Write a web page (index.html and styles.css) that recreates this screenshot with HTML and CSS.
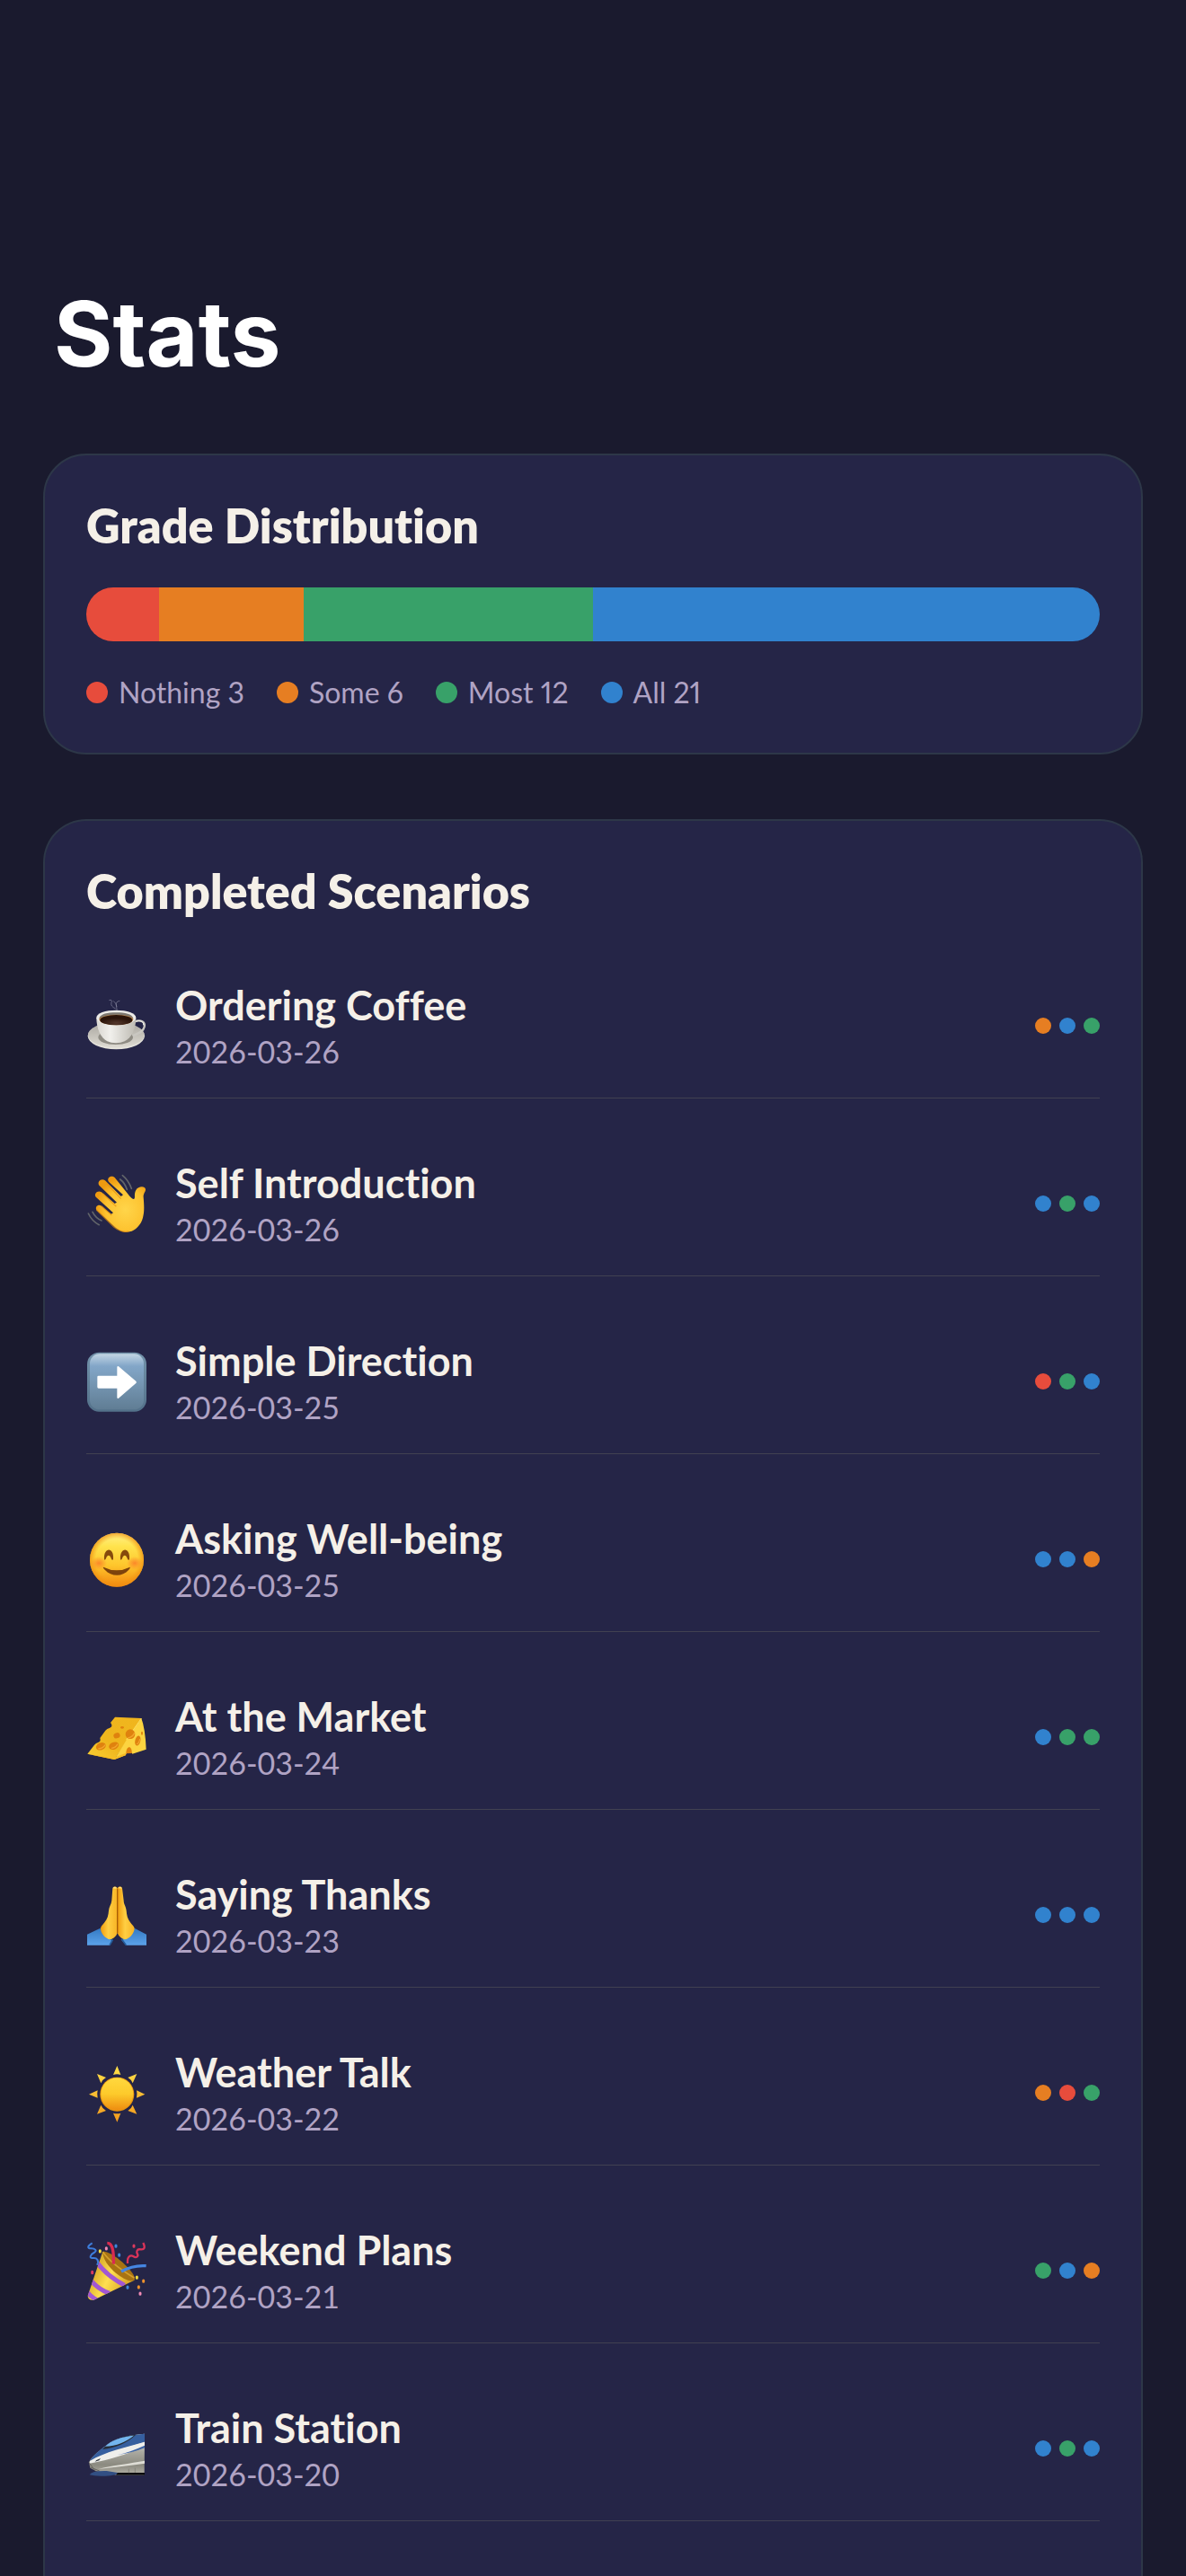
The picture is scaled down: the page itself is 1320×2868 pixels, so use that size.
FILE: index.html
```html
<!DOCTYPE html>
<html lang="en">
<head>
  <meta charset="UTF-8">
  <meta name="viewport" content="width=device-width, initial-scale=1.0">
  <title>Stats</title>
  <link rel="stylesheet" href="styles.css">
</head>
<body>
  <main class="page">
    <h1 class="page-title">Stats</h1>

    <section class="card">
      <h2 class="card-title">Grade Distribution</h2>
      <div class="grade-bar">
        <div class="red" style="flex-grow: 3"></div>
        <div class="orange" style="flex-grow: 6"></div>
        <div class="green" style="flex-grow: 12"></div>
        <div class="blue" style="flex-grow: 21"></div>
      </div>
      <ul class="legend">
        <li><span class="key red"></span>Nothing 3</li>
        <li><span class="key orange"></span>Some 6</li>
        <li><span class="key green"></span>Most 12</li>
        <li><span class="key blue"></span>All 21</li>
      </ul>
    </section>

    <section class="card card-open">
      <h2 class="card-title">Completed Scenarios</h2>
      <ul class="scenarios">
        <li class="scenario">
          <!-- coffee -->
          <svg class="icon" viewBox="48 55 204 204" aria-hidden="true">
            <defs>
              <linearGradient id="cup" x1="0" y1="0" x2="1" y2="0">
                <stop offset="0" stop-color="#d8d6d0"/><stop offset=".35" stop-color="#f1f0ec"/><stop offset="1" stop-color="#bdbab2"/>
              </linearGradient>
              <linearGradient id="saucer" x1="0" y1="0" x2="0" y2="1">
                <stop offset="0" stop-color="#a9a69f"/><stop offset="1" stop-color="#dedbd3"/>
              </linearGradient>
              <radialGradient id="brew" cy=".8">
                <stop offset="0" stop-color="#54382c"/><stop offset="1" stop-color="#2b1409"/>
              </radialGradient>
            </defs>
            <path d="M124 72q12-4 8 8t14 20M160 74q-14 2-12 14t3 24M138 74q10 6 12 20" fill="none" stroke="#8f8fa6" stroke-width="3" opacity=".6"/>
            <ellipse cx="148" cy="191" rx="95" ry="45" fill="#e4e2db"/>
            <ellipse cx="148" cy="188" rx="94" ry="42" fill="url(#saucer)"/>
            <ellipse cx="146" cy="196" rx="58" ry="24" fill="#8f8c84"/>
            <path d="M210 143c20-8 36 2 32 18-4 18-24 22-39 30" fill="none" stroke="#c9c7c1" stroke-width="7"/>
            <path d="M212 143c17-6 28 0 27 12" fill="none" stroke="#f4f3ef" stroke-width="3"/>
            <path d="M82 130c0 38 14 66 36 79 16 8 42 8 58 0 24-13 38-41 38-79z" fill="url(#cup)"/>
            <ellipse cx="148" cy="130" rx="66" ry="25" fill="#eeece8"/>
            <ellipse cx="148" cy="135" rx="57" ry="20" fill="#b07c45"/>
            <ellipse cx="148" cy="138" rx="54" ry="17" fill="url(#brew)"/>
            <path d="M91 133c4-16 28-20 57-20s54 5 57 20c-10-10-34-13-57-13s-48 4-57 13z" fill="#7d7870"/>
          </svg>
          <div class="info">
            <h3 class="name">Ordering Coffee</h3>
            <time class="date" datetime="2026-03-26">2026-03-26</time>
          </div>
          <div class="grades"><i class="orange"></i><i class="blue"></i><i class="green"></i></div>
        </li>

        <li class="scenario">
          <!-- waving hand -->
          <svg class="icon" viewBox="48 49 204 204" aria-hidden="true">
            <defs>
              <radialGradient id="palm" cx=".6" cy=".6" r=".6">
                <stop offset="0" stop-color="#ffd54a"/><stop offset=".65" stop-color="#fdc22f"/><stop offset="1" stop-color="#ee9a10"/>
              </radialGradient>
            </defs>
            <g fill="none" stroke="#62656a" stroke-width="5" stroke-linecap="round">
              <path d="M169 57q20 16 30 44M161 70q16 12 23 34M55 184q12 26 36 38M69 179q10 20 30 29"/>
            </g>
            <path d="M82 172c-6-12 8-20 17-13l32 27 7-4-57-52c-10-12 6-26 18-17l44 38 7-4-59-57c-8-13 8-25 20-16l53 53 7-5-48-44c-9-14 10-24 20-14l44 55c8 12 18 20 21 16 5-5-2-14 6-29 7-13 30-15 32-3 1 8-8 14-7 27 2 24 4 48-2 68-6 24-25 43-44 47-20 5-38-5-51-17z" fill="url(#palm)"/>
            <path d="M99 159l34 31M104 118l44 43M117 85l47 50M82 172l58 57q25 20 50 15" fill="none" stroke="#e48d10" stroke-width="4" opacity=".65"/>
          </svg>
          <div class="info">
            <h3 class="name">Self Introduction</h3>
            <time class="date" datetime="2026-03-26">2026-03-26</time>
          </div>
          <div class="grades"><i class="blue"></i><i class="green"></i><i class="blue"></i></div>
        </li>

        <li class="scenario">
          <!-- right arrow -->
          <svg class="icon" viewBox="48 43 204 204" aria-hidden="true">
            <defs>
              <linearGradient id="key-edge" x1="0" y1="0" x2="0" y2="1">
                <stop offset="0" stop-color="#7393ab"/><stop offset="1" stop-color="#53718a"/>
              </linearGradient>
              <linearGradient id="key-face" x1="0" y1="0" x2="0" y2="1">
                <stop offset="0" stop-color="#c3d6e4"/><stop offset=".22" stop-color="#82a6c8"/><stop offset=".5" stop-color="#7798b5"/><stop offset="1" stop-color="#607d94"/>
              </linearGradient>
            </defs>
            <rect x="51" y="48" width="198" height="198" rx="40" fill="url(#key-edge)"/>
            <rect x="60" y="53" width="180" height="186" rx="32" fill="url(#key-face)"/>
            <path d="M89 126h62V97q1-4 5-2l58 49q3 4 0 7l-58 50q-4 2-5-2v-31H89q-4 0-4-4v-34q0-4 4-4z" fill="#fff"/>
          </svg>
          <div class="info">
            <h3 class="name">Simple Direction</h3>
            <time class="date" datetime="2026-03-25">2026-03-25</time>
          </div>
          <div class="grades"><i class="red"></i><i class="green"></i><i class="blue"></i></div>
        </li>

        <li class="scenario">
          <!-- smiling face -->
          <svg class="icon" viewBox="48 37 204 204" aria-hidden="true">
            <defs>
              <linearGradient id="face" x1="0" y1="0" x2="0" y2="1">
                <stop offset="0" stop-color="#fff089"/><stop offset=".25" stop-color="#ffe34d"/><stop offset=".6" stop-color="#fec62c"/><stop offset="1" stop-color="#f2870f"/>
              </linearGradient>
              <radialGradient id="face-rim">
                <stop offset=".78" stop-color="#f39a12" stop-opacity="0"/><stop offset="1" stop-color="#ee8c12" stop-opacity=".75"/>
              </radialGradient>
              <radialGradient id="blush">
                <stop offset="0" stop-color="#fb7c28" stop-opacity=".85"/><stop offset="1" stop-color="#fb7c28" stop-opacity="0"/>
              </radialGradient>
            </defs>
            <circle cx="150" cy="141" r="90" fill="url(#face)"/>
            <circle cx="150" cy="141" r="90" fill="url(#face-rim)"/>
            <ellipse cx="90" cy="152" rx="27" ry="22" fill="url(#blush)"/>
            <ellipse cx="210" cy="152" rx="27" ry="22" fill="url(#blush)"/>
            <path d="M108 139c-3-42 34-42 30 0-3 5-5 2-7-3-5-13-12-13-17 0-2 4-5 7-6 3zM162 139c-3-42 34-42 30 0-3 5-5 2-7-3-5-13-12-13-17 0-2 4-5 7-6 3z" fill="#864b0c"/>
            <path d="M105 165q45 22 89 0q2 3-4 9c-22 25-58 24-80 0q-7-7-5-9z" fill="#7d430c"/>
          </svg>
          <div class="info">
            <h3 class="name">Asking Well-being</h3>
            <time class="date" datetime="2026-03-25">2026-03-25</time>
          </div>
          <div class="grades"><i class="blue"></i><i class="blue"></i><i class="orange"></i></div>
        </li>

        <li class="scenario">
          <!-- cheese -->
          <svg class="icon" viewBox="48 631 204 204" aria-hidden="true">
            <defs>
              <linearGradient id="cheese-top" x1="1" y1="0" x2="0" y2="1">
                <stop offset="0" stop-color="#f0b51e"/><stop offset=".6" stop-color="#efb61d"/><stop offset="1" stop-color="#f9cf35"/>
              </linearGradient>
            </defs>
            <path d="M144 666l88 4-90 138-90-19 23-30q5-6 14-9c8-3 6-9 5-14l18-25q5-6 13-8c9-3 11-9 4-18z" fill="url(#cheese-top)"/>
            <path d="M232 670q13 34 16 104l-46 15c-2-9-19-8-22 4l-38 15 40-65z" fill="#fcd440"/>
            <path d="M52 789l90 12 38-15v8l-38 14z" fill="#f6bc24"/>
            <path d="M182 742l50-72" stroke="#ffdf62" stroke-width="3"/>
            <g fill="#df820e">
              <ellipse cx="97" cy="764" rx="17" ry="12" transform="rotate(-22 97 764)"/>
              <ellipse cx="140" cy="762" rx="17" ry="12" transform="rotate(-22 140 762)"/>
              <ellipse cx="150" cy="728" rx="11" ry="9" transform="rotate(-22 150 728)"/>
              <ellipse cx="168" cy="701" rx="6" ry="4"/>
              <ellipse cx="195" cy="723" rx="16" ry="16"/>
              <ellipse cx="220" cy="745" rx="9" ry="17" transform="rotate(12 220 745)"/>
              <ellipse cx="234" cy="720" rx="3" ry="6"/>
              <path d="M181 788c0-28 21-28 19-1z"/>
            </g>
            <path d="M88 771q14 2 24-13M132 770q14 0 21-14M187 736q18-4 22-18M216 757q9-4 11-18" fill="none" stroke="#f3a42c" stroke-width="4"/>
          </svg>
          <div class="info">
            <h3 class="name">At the Market</h3>
            <time class="date" datetime="2026-03-24">2026-03-24</time>
          </div>
          <div class="grades"><i class="blue"></i><i class="green"></i><i class="green"></i></div>
        </li>

        <li class="scenario">
          <!-- folded hands -->
          <svg class="icon" viewBox="48 55 204 204" aria-hidden="true">
            <defs>
              <linearGradient id="hand" x1="0" y1="0" x2="1" y2="0">
                <stop offset="0" stop-color="#f09c0e"/><stop offset=".45" stop-color="#ffcf43"/><stop offset="1" stop-color="#f7b324"/>
              </linearGradient>
              <linearGradient id="sleeve" x1="0" y1="0" x2="0" y2="1">
                <stop offset="0" stop-color="#3479c2"/><stop offset="1" stop-color="#5ba2ea"/>
              </linearGradient>
            </defs>
            <path d="M51 222l44-21 42 40-10 17H51zM249 222l-40-21-43 40 15 17h68z" fill="url(#sleeve)"/>
            <path d="M95 201l40 41-9 16M209 201l-42 38 14 19" fill="none" stroke="#245b98" stroke-width="5"/>
            <path d="M152 68c-3-7-14-7-16 0l-3 41c-1 13-9 20-10 34-1 15-4 28-14 39-5 7-12 12-13 20-1 13 15 36 33 37 11-4 23-14 23-26z" fill="url(#hand)"/>
            <path d="M152 68c3-7 14-7 16 0l5 41c0 13 8 20 9 34 1 15 4 28 13 39 5 7 12 12 14 20 0 13-15 36-33 37-11-4-24-14-24-26z" fill="url(#hand)"/>
            <path d="M152 71v147" stroke="#a95e05" stroke-width="4"/>
            <path d="M139 68q5-5 9 0M157 68q5-5 8 0" stroke="#ffe184" stroke-width="4" fill="none"/>
          </svg>
          <div class="info">
            <h3 class="name">Saying Thanks</h3>
            <time class="date" datetime="2026-03-23">2026-03-23</time>
          </div>
          <div class="grades"><i class="blue"></i><i class="blue"></i><i class="blue"></i></div>
        </li>

        <li class="scenario">
          <!-- sun -->
          <svg class="icon" viewBox="48 49 204 204" aria-hidden="true">
            <defs>
              <linearGradient id="sun" x1="0" y1="0" x2="0" y2="1">
                <stop offset="0" stop-color="#ffd83e"/><stop offset=".5" stop-color="#fdca2b"/><stop offset="1" stop-color="#ee8d10"/>
              </linearGradient>
              <linearGradient id="rays" gradientUnits="userSpaceOnUse" x1="0" y1="60" x2="0" y2="250">
                <stop offset="0" stop-color="#ffe14a"/><stop offset="1" stop-color="#f39a1c"/>
              </linearGradient>
            </defs>
            <path fill="url(#rays)" d="M151 61l12 30q-12-4-25 0zM151 249l12-30q-12 4-25 0zM57 156l29-13q-3 13 0 25zM244 156l-28-13q3 13 0 25zM84 88l30 12q-12 7-17 19zM217 88l-30 12q12 7 16 19zM84 222l30-11q-12-7-17-19zM217 222l-30-11q12-7 16-19z"/>
            <circle cx="151" cy="156" r="57" fill="#e8940f"/>
            <circle cx="151" cy="155" r="54" fill="url(#sun)"/>
          </svg>
          <div class="info">
            <h3 class="name">Weather Talk</h3>
            <time class="date" datetime="2026-03-22">2026-03-22</time>
          </div>
          <div class="grades"><i class="orange"></i><i class="red"></i><i class="green"></i></div>
        </li>

        <li class="scenario">
          <!-- party popper -->
          <svg class="icon" viewBox="48 43 204 204" aria-hidden="true">
            <defs>
              <linearGradient id="cone" x1="0" y1=".3" x2="1" y2=".8">
                <stop offset="0" stop-color="#c99719"/><stop offset=".45" stop-color="#ffdf50"/><stop offset="1" stop-color="#c98e16"/>
              </linearGradient>
              <clipPath id="cone-shape">
                <path d="M102 84L53 229q0 16 20 14l136-66c-18-42-63-88-107-93z"/>
              </clipPath>
            </defs>
            <path d="M102 84L53 229q0 16 20 14l136-66c-18-42-63-88-107-93z" fill="url(#cone)"/>
            <g clip-path="url(#cone-shape)" fill="none" stroke="#a257d3" stroke-width="15">
              <path d="M84 118q32 44 92 76M64 177q22 30 62 44M50 213q10 18 34 30"/>
            </g>
            <path d="M103 82c18-8 91 48 106 84 4 12-6 16-22 11-35-12-84-57-84-95z" fill="#a87312"/>
            <path d="M103 82c22 32 60 60 105 87" fill="none" stroke="#d3a02b" stroke-width="5"/>
            <path d="M118 53c20 0 22 34 21 70" fill="none" stroke="#d92b50" stroke-width="10"/>
            <path d="M165 148q38-22 83-19" fill="none" stroke="#4586e2" stroke-width="10"/>
            <path d="M68 53c-16 9-18 18-4 18s22 8 10 14-18 20-4 18 22 9 14 23" fill="none" stroke="#3e7ddb" stroke-width="6"/>
            <path d="M238 52c8 17 4 24-9 22s-14 9-10 16-4 14-13 8-22-3-20 23" fill="none" stroke="#d93359" stroke-width="7"/>
            <g stroke-width="9" stroke-linecap="round">
              <path d="M94 78v4M217 166v4" stroke="#f5e040" />
              <path d="M115 69v4M228 220v4" stroke="#f18bb5"/>
              <path d="M147 61v4M158 91v4M186 199v4" stroke="#3d86dd"/>
              <path d="M207 61v4M68 149v4" stroke="#da3b5e"/>
              <path d="M239 178v4M223 198v4" stroke="#ef922d"/>
            </g>
          </svg>
          <div class="info">
            <h3 class="name">Weekend Plans</h3>
            <time class="date" datetime="2026-03-21">2026-03-21</time>
          </div>
          <div class="grades"><i class="green"></i><i class="blue"></i><i class="orange"></i></div>
        </li>

        <li class="scenario">
          <!-- bullet train -->
          <svg class="icon" viewBox="48 37 204 204" aria-hidden="true">
            <defs>
              <linearGradient id="train" x1="0" y1="0" x2="0" y2="1">
                <stop offset="0" stop-color="#e9e9e5"/><stop offset=".45" stop-color="#a9a89f"/><stop offset=".75" stop-color="#8b8a80"/><stop offset="1" stop-color="#b3b1a6"/>
              </linearGradient>
            </defs>
            <path d="M243 90c-42 3-92 12-119 32-28 21-57 42-67 63l4 19 20 11 71 13h90z" fill="url(#train)"/>
            <path d="M243 90c-42 3-92 12-119 32-26 19-53 40-64 59 50-29 120-43 183-64z" fill="#365f9f"/>
            <path d="M243 117c-65 19-132 32-183 64l-1 8c70-14 120-29 184-57z" fill="#efefec"/>
            <path d="M243 129c-30 14-62 25-92 32 34-6 66-13 92-24z" fill="#3d64a6"/>
            <path d="M213 94c-46 2-86 21-111 48 46-5 82-21 111-48z" fill="#272d36"/>
            <path d="M207 96c-43 3-76 17-96 36 38-1 70-15 96-36z" fill="#73b5ee"/>
            <path d="M82 178l14-6-5 7-14 4z" fill="#343841"/>
            <path d="M88 208c46-13 108-19 155-28v9c-50 7-103 12-155 19z" fill="#deddd5"/>
            <path d="M57 186l22 29M62 202l30 12" fill="none" stroke="#67655f" stroke-width="3"/>
            <path d="M148 220h95v8h-95z" fill="#090a0d"/>
            <path d="M59 227q7-14 57-13l37 6q-3 10-42 11-37 1-52-4z" fill="#324f83"/>
            <path d="M190 207v14M211 204v16" stroke="#7a7970" stroke-width="2"/>
          </svg>
          <div class="info">
            <h3 class="name">Train Station</h3>
            <time class="date" datetime="2026-03-20">2026-03-20</time>
          </div>
          <div class="grades"><i class="blue"></i><i class="green"></i><i class="blue"></i></div>
        </li>
      </ul>
    </section>
  </main>
</body>
</html>
```
FILE: styles.css
```css
* {
  box-sizing: border-box;
  margin: 0;
  padding: 0;
}

body {
  background: #1a1a2e;
  color: #f5f0e8;
  font-family: Lato, "Open Sans", sans-serif;
  font-variant-ligatures: none;
}

ul {
  list-style: none;
}

.page {
  display: flex;
  flex-direction: column;
  min-height: 100vh;
  padding: 310px 48px 0;
}

.page-title {
  margin: 0 12px 71px;
  color: #fff;
  font-family: Inter, sans-serif;
  font-size: 100px;
  font-weight: 700;
  line-height: 124px;
}

.card {
  margin-bottom: 72px;
  padding: 46px;
  background: #252547;
  border: 2px solid #2d3748;
  border-radius: 48px;
}

/* the list runs off the bottom of the screen */
.card-open {
  flex: 1;
  margin-bottom: 0;
  padding-bottom: 0;
  border-bottom: 0;
  border-radius: 48px 48px 0 0;
}

.card-title {
  font-size: 52px;
  font-weight: 800;
  line-height: 65px;
}

.grade-bar {
  display: flex;
  height: 60px;
  margin: 36px 0;
  border-radius: 30px;
  overflow: hidden;
}

.legend {
  display: flex;
  gap: 36px;
  color: #b0a3c4;
  font-size: 32px;
  font-variant-numeric: proportional-nums;
  line-height: 42px;
}

.legend li {
  display: flex;
  align-items: center;
  gap: 12px;
}

.key {
  width: 24px;
  height: 24px;
  border-radius: 50%;
}

.scenario {
  display: flex;
  align-items: center;
  padding: 66px 0 30px;
  border-bottom: 1px solid #414151;
}

.icon {
  width: 68px;
  height: 68px;
  margin-right: 31px;
}

.info {
  flex: 1;
}

.name {
  margin-bottom: 2px;
  font-size: 45px;
  font-weight: 700;
  line-height: 57px;
}

.date {
  display: block;
  color: #b0a3c4;
  font-size: 34px;
  line-height: 42px;
}

.grades {
  display: flex;
  gap: 9px;
}

.grades i {
  width: 18px;
  height: 18px;
  border-radius: 50%;
}

.red { background: #e74c3c; }
.orange { background: #e67e22; }
.green { background: #38a169; }
.blue { background: #3182ce; }
```
